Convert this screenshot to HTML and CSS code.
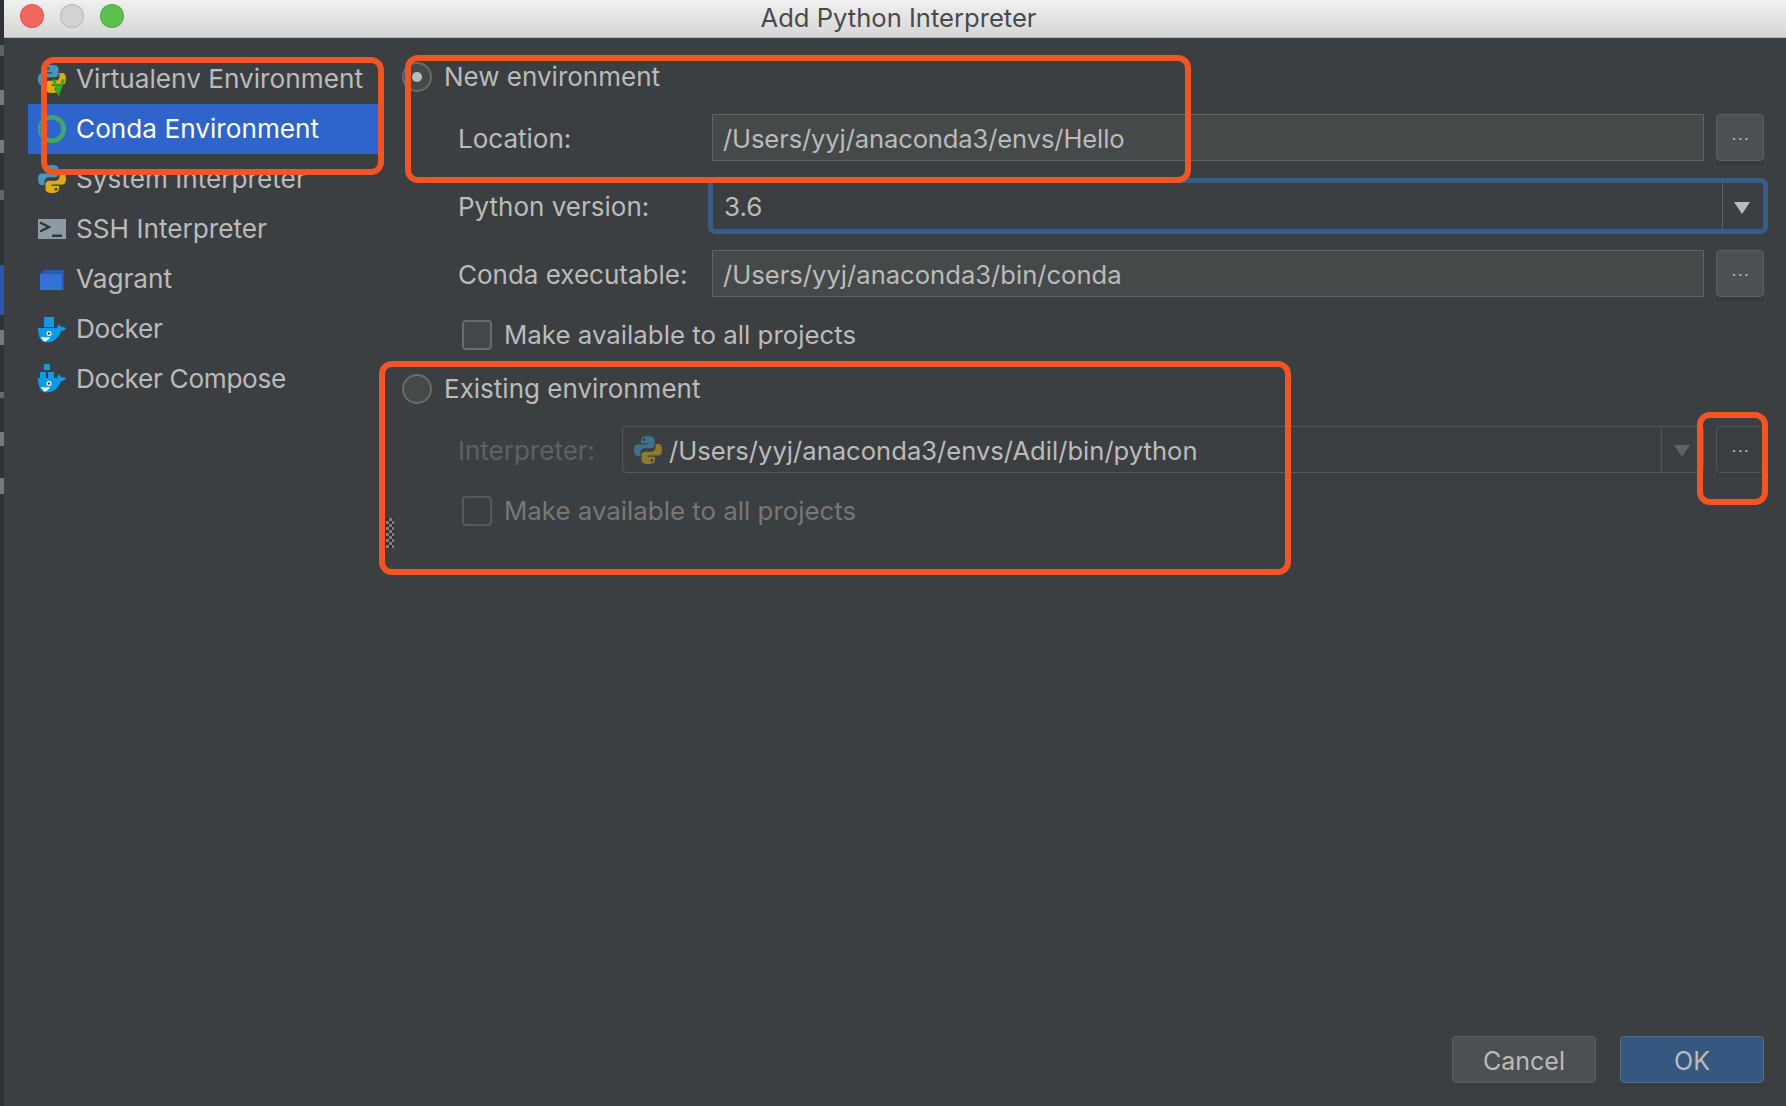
FILE: index.html
```html
<!DOCTYPE html>
<html lang="en">
<head>
<meta charset="utf-8">
<title>Add Python Interpreter</title>
<link rel="stylesheet" href="styles.css">
</head>
<body>
<svg class="defs" width="0" height="0" aria-hidden="true">
  <defs>
    <symbol id="py-half" viewBox="0 0 28 28">
      <path fill-rule="evenodd" d="M14 0C9.500 0 7 1.200 7 4v3.200h7.300V8.500H3.500C1.200 8.500 0 10.500 0 14s1.200 6 3.500 6H6.500v-3.200C6.500 14 8.500 12.300 11 12.300h6c2 0 3.500-1.500 3.500-3.500V4C20.500 1.200 18 0 14 0zM10 2.200a1.400 1.400 0 1 1 0 2.800 1.400 1.400 0 0 1 0-2.800z"/>
    </symbol>
    <symbol id="whale" viewBox="0 0 28 28">
      <path fill="#0d9be8" d="M0 13h19c.2-1.500.8-2.800 1.800-3.800 1.200.8 2 1.900 2.200 3.100 1.700-.5 3.600-.2 5 .9-1 1.800-2.800 2.800-5 2.700C21 22.500 15.500 27.500 8.500 27.500 3 27.500 0 22 0 13z"/>
      <path fill="#fff" d="M3 22c3 .3 6 .8 9 0-1.500 3-3.500 4.200-5.500 4.500C5.200 25.500 4 24 3 22z"/>
      <circle cx="11" cy="18.500" r="2.500" fill="#fff"/>
      <circle cx="11" cy="18.500" r="1.200" fill="#20415a"/>
    </symbol>
  </defs>
</svg>

<div class="window">
  <div class="edge"></div>
  <div class="dialog">
    <header class="titlebar">
      <div class="lights">
        <span class="light light-red"></span>
        <span class="light light-gray"></span>
        <span class="light light-green"></span>
      </div>
      <h1 class="title">Add Python Interpreter</h1>
    </header>

    <div class="body">
      <nav class="sidebar">
        <div class="item">
          <svg class="icon" viewBox="0 0 28 28">
            <use href="#py-half" class="py-blue"/>
            <use href="#py-half" class="py-yellow" transform="rotate(180 14 14)"/>
            <path class="venv-v" d="M15.500 14.500l5 13 5-13"/>
          </svg>
          <span class="item-text">Virtualenv Environment</span>
        </div>
        <div class="item item-active">
          <svg class="icon" viewBox="0 0 28 28">
            <circle class="conda-ring" cx="14" cy="14" r="11.700"/>
            <path class="conda-dots" d="M8.500 3.700A11.700 11.700 0 0 0 6 22.500"/>
          </svg>
          <span class="item-text">Conda Environment</span>
        </div>
        <div class="item">
          <svg class="icon" viewBox="0 0 28 28">
            <use href="#py-half" class="py-blue"/>
            <use href="#py-half" class="py-yellow" transform="rotate(180 14 14)"/>
          </svg>
          <span class="item-text">System Interpreter</span>
        </div>
        <div class="item">
          <svg class="icon" viewBox="0 0 28 28">
            <rect class="ssh-bg" x="0" y="4" width="28" height="20"/>
            <path class="ssh-mark" d="M2 7.500l9 4.500-9 4.500M14 20.800h10"/>
          </svg>
          <span class="item-text">SSH Interpreter</span>
        </div>
        <div class="item">
          <svg class="icon" viewBox="0 0 28 28">
            <path class="vag-top" d="M2 9l4-4h20v20h-2V9z"/>
            <path class="vag-side" d="M24 9l2-4v16l-2 4z"/>
            <rect class="vag-front" x="2" y="9" width="22" height="16"/>
          </svg>
          <span class="item-text">Vagrant</span>
        </div>
        <div class="item">
          <svg class="icon" viewBox="0 0 28 28">
            <rect class="dock-sq" x="6" y="2" width="10" height="10"/>
            <use href="#whale"/>
          </svg>
          <span class="item-text item-tight">Docker</span>
        </div>
        <div class="item">
          <svg class="icon" viewBox="0 0 28 28">
            <rect class="dock-sq" x="6" y="-1" width="6" height="6"/>
            <rect class="dock-sq" x="2" y="7" width="6" height="6"/>
            <rect class="dock-sq" x="10" y="7" width="6" height="6"/>
            <use href="#whale"/>
          </svg>
          <span class="item-text item-tight">Docker Compose</span>
        </div>
      </nav>

      <main class="main">
        <div class="radio-row radio-row-new">
          <span class="radio radio-on"></span>
          <span class="raise">New environment</span>
        </div>
        <div class="form-row row-location">
          <label class="label label-low">Location:</label>
          <div class="field field-tight"><span class="sink">/Users/yyj/anaconda3/envs/Hello</span></div>
          <div class="browse"><span class="dots">...</span></div>
        </div>
        <div class="form-row row-python">
          <label class="label">Python version:</label>
          <div class="combo-focus">
            <span class="combo-value">3.6</span>
            <span class="combo-arrow"><i class="arrow"></i></span>
          </div>
        </div>
        <div class="form-row row-conda">
          <label class="label label-low">Conda executable:</label>
          <div class="field"><span class="sink">/Users/yyj/anaconda3/bin/conda</span></div>
          <div class="browse"><span class="dots">...</span></div>
        </div>
        <div class="check-row row-check-new">
          <span class="check"></span>
          <span class="raise check-text">Make available to all projects</span>
        </div>

        <div class="radio-row radio-row-existing">
          <span class="radio"></span>
          <span class="raise">Existing environment</span>
        </div>
        <div class="form-row row-interp">
          <label class="label label-short label-off label-low">Interpreter:</label>
          <div class="combo-off">
            <svg class="icon-small" viewBox="0 0 28 28">
              <use href="#py-half" class="py-blue-off"/>
              <use href="#py-half" class="py-yellow-off" transform="rotate(180 14 14)"/>
            </svg>
            <span class="combo-path sink">/Users/yyj/anaconda3/envs/Adil/bin/python</span>
            <span class="combo-arrow-off"><i class="arrow arrow-off"></i></span>
          </div>
          <div class="browse browse-off"><span class="dots">...</span></div>
        </div>
        <div class="check-row check-off row-check-existing">
          <span class="check"></span>
          <span class="raise check-text">Make available to all projects</span>
        </div>

        <footer class="actions">
          <button class="btn" type="button">Cancel</button>
          <button class="btn btn-ok" type="button">OK</button>
        </footer>
      </main>
    </div>
  </div>

  <span class="grip"></span>
  <span class="mark mark-list"></span>
  <span class="mark mark-new"></span>
  <span class="mark mark-existing"></span>
  <span class="mark mark-browse"></span>
</div>
</body>
</html>
```

FILE: styles.css
```css
* { box-sizing: border-box; }

html, body {
  margin: 0;
  padding: 0;
  width: 1786px;
  height: 1106px;
  overflow: hidden;
  background: #3c3f41;
}

.defs { position: absolute; }

.window {
  position: relative;
  display: flex;
  width: 1786px;
  height: 1106px;
  font-family: Inter, "Noto Sans", sans-serif;
  font-size: 26px;
  color: #bbbbbb;
}

.edge {
  width: 4px;
  flex: none;
  background: linear-gradient(to bottom,
    #2f3338 0, #2f3338 45px, #5d6366 45px, #5d6366 56px, #2f3338 56px, #2f3338 90px,
    #77787a 90px, #77787a 105px, #2f3338 105px, #2f3338 140px,
    #77787a 140px, #77787a 153px, #2f3338 153px, #2f3338 190px,
    #5d6870 190px, #5d6870 200px, #2f3338 200px, #2f3338 265px,
    #2d55b0 265px, #2d55b0 315px, #2f3338 315px, #2f3338 330px,
    #77787a 330px, #77787a 345px, #2f3338 345px, #2f3338 392px,
    #66686a 392px, #66686a 398px, #2f3338 398px, #2f3338 432px,
    #77787a 432px, #77787a 446px, #2f3338 446px, #2f3338 478px,
    #77787a 478px, #77787a 494px, #2f3338 494px);
}

.dialog {
  flex: 1;
  display: flex;
  flex-direction: column;
  min-width: 0;
}

.titlebar {
  position: relative;
  display: flex;
  align-items: center;
  justify-content: center;
  height: 38px;
  flex: none;
  padding-left: 7px;
  background: linear-gradient(to bottom, #f0f0f0, #d6d6d6);
  border-bottom: 1px solid #b4b4b4;
}

.lights {
  position: absolute;
  left: 16px;
  top: 4px;
  display: flex;
  gap: 16px;
}

.light {
  width: 24px;
  height: 24px;
  border-radius: 50%;
  border: 1px solid rgba(0, 0, 0, .12);
}
.light-red { background: #f3665f; }
.light-gray { background: #d2d2d2; }
.light-green { background: #5cc24f; }

.title {
  margin: 0;
  padding-bottom: 3px;
  font-size: 25.6px;
  font-weight: 400;
  color: #4a4a4a;
}

.body {
  flex: 1;
  display: flex;
  min-height: 0;
}

.sidebar {
  width: 350px;
  flex: none;
  margin-left: 24px;
  padding-top: 16px;
}

.item {
  display: flex;
  align-items: center;
  height: 50px;
  padding-left: 10px;
  gap: 10px;
}
.item-text {
  font-size: 26.2px;
  padding-bottom: 2px;
}
.item-tight { letter-spacing: -.32px; }
.item-active {
  background: #2f65ca;
  color: #fff;
}

.icon {
  width: 28px;
  height: 28px;
  flex: none;
  overflow: visible;
}
.icon-small {
  width: 28px;
  height: 28px;
  flex: none;
}

.py-blue { fill: #4695bf; }
.py-yellow { fill: #dcab16; }
.py-blue-off { fill: #3f708c; }
.py-yellow-off { fill: #8f7b29; }
.venv-v { fill: none; stroke: #2fae1c; stroke-width: 3; }
.conda-ring { fill: none; stroke: #3fa868; stroke-width: 4.600; }
.conda-dots { fill: none; stroke: #2f65ca; stroke-width: 1.600; stroke-dasharray: 2 2; }
.ssh-bg { fill: #8e9ba3; }
.ssh-mark { fill: none; stroke: #33373a; stroke-width: 2.400; }
.vag-top { fill: #2a5cb0; }
.vag-side { fill: #2658a8; }
.vag-front { fill: #3272d8; }
.dock-sq { fill: #0d9be8; }

.main {
  flex: 1;
  display: flex;
  flex-direction: column;
  min-width: 0;
  padding: 24px 22px 0 24px;
}

.raise { padding-bottom: 2px; }
.sink { padding-top: 2px; }
.check-text { font-size: 25.85px; }

.radio-row {
  display: flex;
  align-items: center;
  gap: 12px;
  height: 30px;
}
.radio-row-existing { margin-top: 24px; }

.radio {
  position: relative;
  width: 30px;
  height: 30px;
  flex: none;
  border-radius: 50%;
  border: 2px solid #6b6b6b;
  background: #45494a;
}
.radio-on::after {
  content: "";
  position: absolute;
  left: 8px;
  top: 8px;
  width: 10px;
  height: 10px;
  border-radius: 50%;
  background: #bbbbbb;
}

.form-row {
  display: flex;
  align-items: center;
  height: 47px;
  padding-left: 56px;
}
.row-location { margin-top: 22px; }
.row-python { height: 56px; margin-top: 17px; }
.row-conda { margin-top: 16px; }
.row-interp { margin-top: 22px; }

.label {
  width: 254px;
  flex: none;
}
.label-low { padding-top: 2px; }
.label-short { width: 164px; }
.label-off { color: #5f6162; }

.field {
  flex: 1;
  min-width: 0;
  height: 47px;
  display: flex;
  align-items: center;
  padding-left: 10px;
  font-size: 25.6px;
  background: #45494a;
  border: 1.500px solid #646464;
}
.field-tight { letter-spacing: -.14px; }

.browse {
  width: 48px;
  height: 47px;
  flex: none;
  margin-left: 12px;
  display: flex;
  align-items: center;
  justify-content: center;
  padding-left: 2px;
  background: #4c5052;
  border: 1.500px solid #5e6060;
  border-radius: 4px;
  box-shadow: 0 4px 0 #393b3d;
}
.browse-off {
  background: transparent;
  border-color: #565859;
}
.dots {
  font-size: 16px;
  line-height: 1;
  letter-spacing: 1.500px;
  padding-bottom: 8px;
}

.combo-focus {
  flex: 1;
  min-width: 0;
  height: 56px;
  margin-left: -4px;
  margin-right: -4px;
  display: flex;
  align-items: center;
  border: 5px solid #375d86;
  border-radius: 7px;
  background: #3c3f41;
}
.combo-value {
  flex: 1;
  padding-left: 11px;
}
.combo-arrow {
  width: 41px;
  height: 100%;
  flex: none;
  display: flex;
  align-items: center;
  justify-content: center;
  padding-right: 2px;
  border-left: 1.500px solid #646464;
}
.arrow {
  width: 0;
  height: 0;
  margin-top: 3px;
  border-left: 8px solid transparent;
  border-right: 8px solid transparent;
  border-top: 12px solid #bbbbbb;
}
.arrow-off { border-top-color: #5f6162; }

.combo-off {
  flex: 1;
  min-width: 0;
  height: 47px;
  display: flex;
  align-items: center;
  padding-left: 11px;
  gap: 7px;
  font-size: 25.6px;
  border: 1.500px solid #565859;
  border-radius: 4px;
}
.combo-path { flex: 1; }
.combo-arrow-off {
  width: 42px;
  height: 100%;
  flex: none;
  display: flex;
  align-items: center;
  justify-content: center;
  padding-right: 2px;
  border-left: 1.500px solid #565859;
}

.check-row {
  display: flex;
  align-items: center;
  gap: 12px;
  height: 30px;
  padding-left: 60px;
}
.row-check-new { margin-top: 23px; }
.row-check-existing { margin-top: 23px; }

.check {
  width: 30px;
  height: 30px;
  flex: none;
  border: 2px solid #6b6b6b;
  border-radius: 4px;
  background: #43474a;
}
.check-off { color: #777777; }
.check-off .check {
  background: transparent;
  border-color: #565859;
}

.actions {
  margin-top: auto;
  display: flex;
  justify-content: flex-end;
  gap: 24px;
  padding-bottom: 23px;
}

.btn {
  width: 144px;
  height: 47px;
  font: inherit;
  font-size: 25px;
  color: inherit;
  background: #4c5052;
  border: 1.500px solid #5e6060;
  border-radius: 4px;
  box-shadow: 0 4px 0 #393b3d;
  padding: 2px 0 0;
}
.btn-ok {
  background: #365880;
  border-color: #4c708c;
}

.grip {
  position: absolute;
  left: 386px;
  top: 518px;
  width: 8px;
  height: 30px;
  background: repeating-conic-gradient(#808080 0 25%, #303234 0 50%) 0 0 / 6px 6px;
}

.mark {
  position: absolute;
  border: 6px solid #f15524;
  border-radius: 13px;
}
.mark-list { left: 41px; top: 57px; width: 343px; height: 118px; }
.mark-new { left: 405px; top: 55px; width: 786px; height: 128px; }
.mark-existing { left: 379px; top: 361px; width: 912px; height: 214px; }
.mark-browse { left: 1697px; top: 412px; width: 71px; height: 93px; }
```
